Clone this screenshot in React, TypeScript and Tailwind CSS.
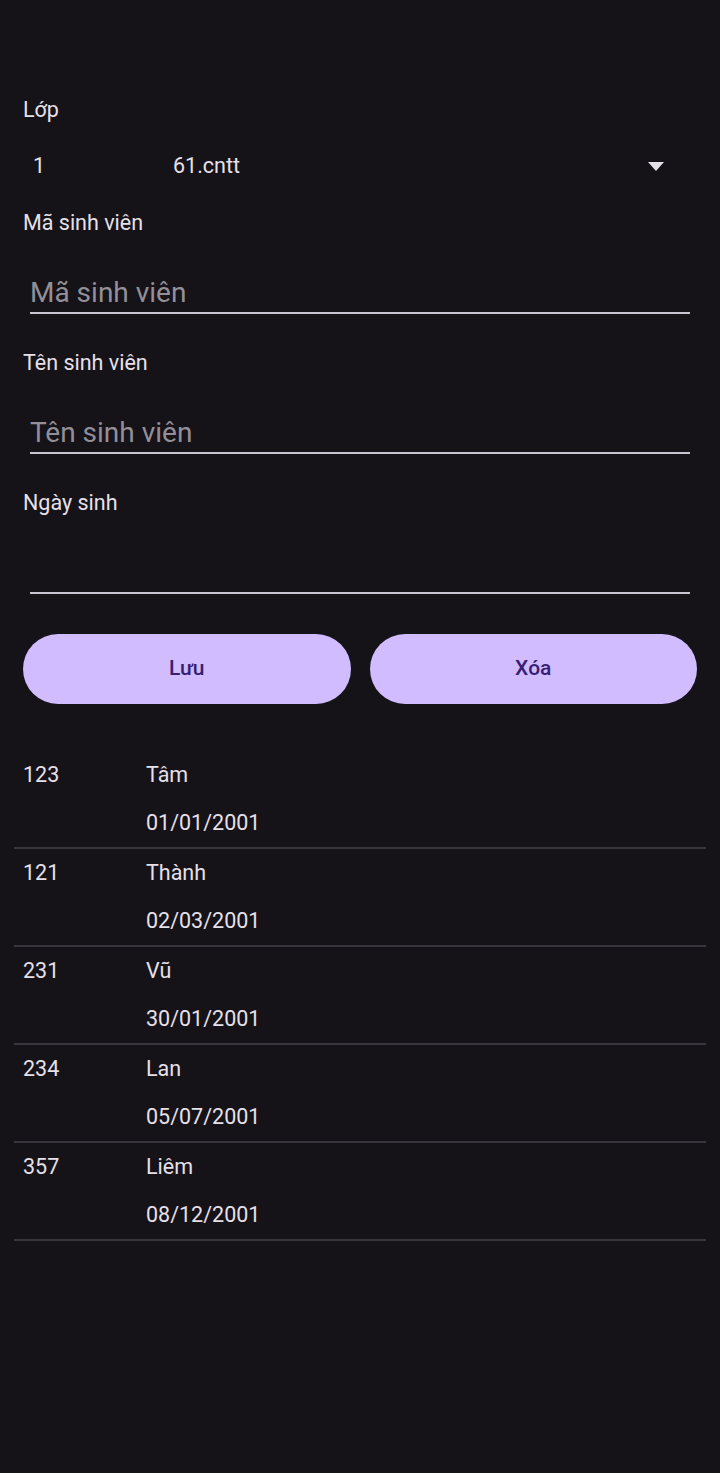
import React from "react";

const students = [
  { id: "123", name: "Tâm", dob: "01/01/2001" },
  { id: "121", name: "Thành", dob: "02/03/2001" },
  { id: "231", name: "Vũ", dob: "30/01/2001" },
  { id: "234", name: "Lan", dob: "05/07/2001" },
  { id: "357", name: "Liêm", dob: "08/12/2001" },
];

const Label = ({ text, className = "" }: { text: string; className?: string }) => (
  <div className={`px-[23px] text-[21.5px] leading-[28px] text-[#e6e0e9] ${className}`}>{text}</div>
);

const Field = ({ placeholder, className = "" }: { placeholder?: string; className?: string }) => (
  <div className={`mx-[30px] h-[40px] border-b-2 border-[#cac4d0] text-[28px] leading-[38px] text-[#938f99] ${className}`}>
    {placeholder}
  </div>
);

export default function App() {
  return (
    <div className="min-h-[1473px] w-full bg-[#151218] pt-[96px] font-['Roboto','Liberation_Sans',sans-serif]">
      <Label text="Lớp" />
      {/* spinner */}
      <div className="mt-[14px] flex h-[56px] items-center text-[21.5px] text-[#e6e0e9]">
        <span className="w-[173px] pl-[33px]">1</span>
        <span className="flex-1">61.cntt</span>
        <svg width="16" height="9" viewBox="0 0 16 9" className="mr-[56px]">
          <path d="M0 0 H16 L8 9 Z" fill="#e6e0e9" />
        </svg>
      </div>
      <Label text="Mã sinh viên" className="mt-[15px]" />
      <Field placeholder="Mã sinh viên" className="mt-[37px]" />
      <Label text="Tên sinh viên" className="mt-[35px]" />
      <Field placeholder="Tên sinh viên" className="mt-[37px]" />
      <Label text="Ngày sinh" className="mt-[35px]" />
      <Field className="mt-[37px]" />

      <div className="mx-[23px] mt-[40px] grid grid-cols-2 gap-[19px]">
        <button className="h-[70px] rounded-full bg-[#d0bcff] text-[21px] font-medium text-[#381e72]">Lưu</button>
        <button className="h-[70px] rounded-full bg-[#d0bcff] text-[21px] font-medium text-[#381e72]">Xóa</button>
      </div>

      <div className="mx-[14px] mt-[47px]">
        {students.map((s) => (
          <div key={s.id} className="border-b-2 border-[#38353c] text-[21.5px] text-[#e6e0e9]">
            <div className="flex h-[48px] items-center">
              <span className="w-[132px] pl-[9px]">{s.id}</span>
              <span>{s.name}</span>
            </div>
            <div className="flex h-[48px] items-center pl-[132px]">{s.dob}</div>
          </div>
        ))}
      </div>
    </div>
  );
}
